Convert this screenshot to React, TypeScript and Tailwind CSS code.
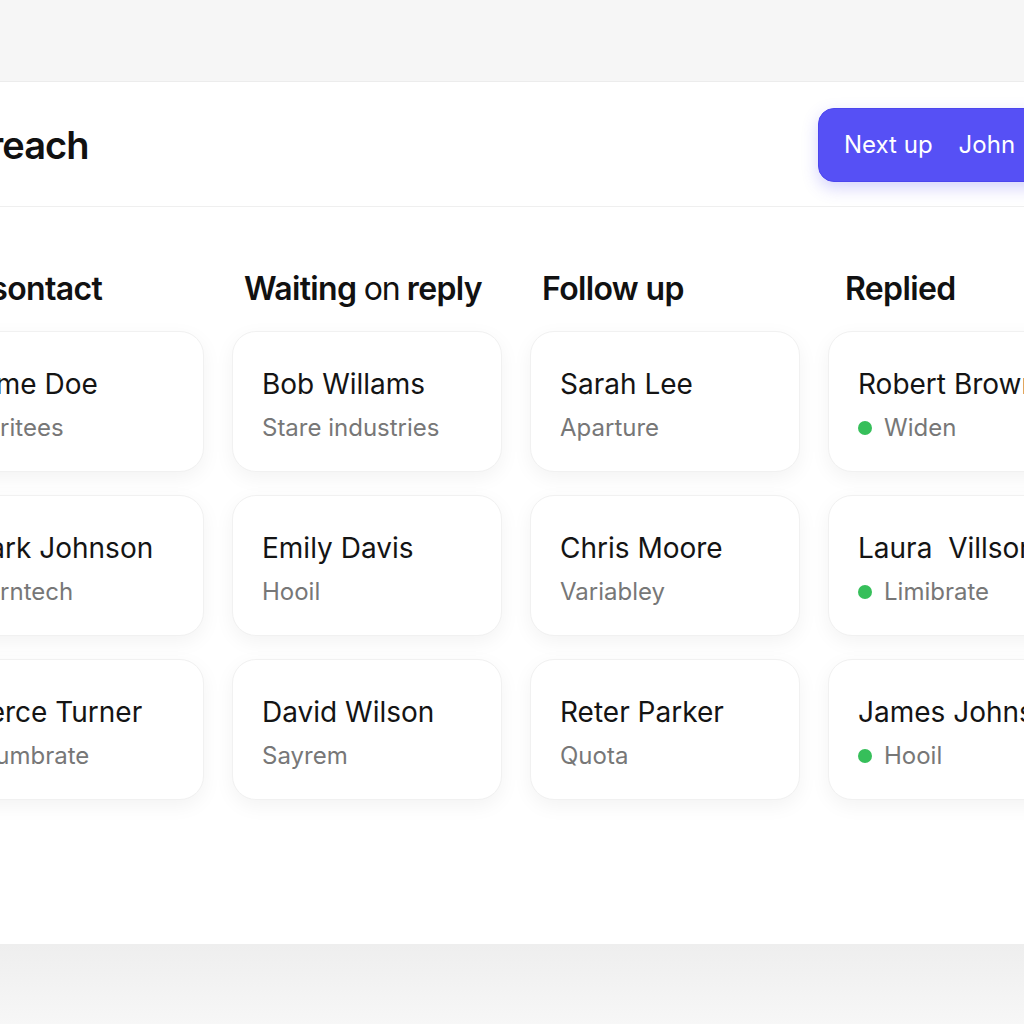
import React from 'react'

type Lead = {
  name: string;
  company: string;
  replied?: boolean;
}

type Column = {
  title: React.ReactNode;
  leads: Lead[];
}

const columns: Column[] = [
  {
    title: 'To sontact',
    leads: [
      { name: 'Jame Doe', company: 'Moritees' },
      { name: 'Mark Johnson', company: 'Morntech' },
      { name: 'Pierce Turner', company: 'Adumbrate' },
    ],
  },
  {
    title: (
      <>
        Waiting <span className="font-normal tracking-[-0.04em]">on</span> reply
      </>
    ),
    leads: [
      { name: 'Bob Willams', company: 'Stare industries' },
      { name: 'Emily Davis', company: 'Hooil' },
      { name: 'David Wilson', company: 'Sayrem' },
    ],
  },
  {
    title: 'Follow up',
    leads: [
      { name: 'Sarah Lee', company: 'Aparture' },
      { name: 'Chris Moore', company: 'Variabley' },
      { name: 'Reter Parker', company: 'Quota' },
    ],
  },
  {
    title: <span className="pl-[5px]">Replied</span>,
    leads: [
      { name: 'Robert Brown', company: 'Widen', replied: true },
      { name: 'Laura  Villson', company: 'Limibrate', replied: true },
      { name: 'James Johnson', company: 'Hooil', replied: true },
    ],
  },
]

const LeadCard = ({ lead }: { lead: Lead }) => (
  <div className="h-[141px] rounded-3xl border border-[#f1f1f1] bg-white px-[29px] pt-[35px] shadow-[0_6px_20px_rgba(0,0,0,0.05)]">
    <div className="whitespace-pre text-[28px] leading-[34px] text-[#141414]">{lead.name}</div>
    <div className="mt-[12px] flex items-center gap-[12px] text-[24px] leading-[30px] text-[#777777] whitespace-nowrap">
      {lead.replied && <span className="h-[14px] w-[14px] shrink-0 rounded-full bg-[#36bf5a]" />}
      <span>{lead.company}</span>
    </div>
  </div>
)

const App = () => {
  return (
    <div className="relative h-[1024px] w-[1024px] overflow-hidden bg-[#f6f6f6] font-['Inter','Noto_Sans',sans-serif]">
      <div className="mt-[81px] -ml-[66px] flex h-[863px] w-[1240px] flex-col border-t border-[#ececec] bg-white">
        <div className="flex h-[125px] items-center justify-between border-b border-[#efefef] pr-[46px] pt-[2px]">
          <h1 className="-ml-[8px] text-[38px] font-semibold tracking-tight text-[#111111]">Outreach</h1>
          <button className="flex h-[74px] w-[310px] items-center gap-[26px] rounded-2xl border border-[#4b45ee] bg-[#5650f5] pl-[25px] text-[24px] text-white shadow-[0_6px_16px_rgba(86,80,245,0.25)]">
            <span>Next up</span>
            <span>John</span>
            <svg width="20" height="20" viewBox="0 0 24 24" fill="none" stroke="currentColor" strokeWidth="2" strokeLinecap="round" strokeLinejoin="round">
              <path d="m9 18 6-6-6-6" />
            </svg>
          </button>
        </div>
        <div className="flex gap-[28px] pt-[63px]">
          {columns.map((col, i) => (
            <div key={i} className="w-[270px] shrink-0">
              <h2 className="mb-[23px] pl-[12px] text-[32px] font-semibold leading-[38px] tracking-[-0.02em] text-[#111111] whitespace-nowrap">
                {col.title}
              </h2>
              <div className="flex flex-col gap-[23px]">
                {col.leads.map((lead) => (
                  <LeadCard key={lead.name} lead={lead} />
                ))}
              </div>
            </div>
          ))}
        </div>
      </div>
      <div className="h-[80px] bg-gradient-to-b from-[#eeeeee] to-[#f7f7f7]" />
    </div>
  )
}

export default App;
